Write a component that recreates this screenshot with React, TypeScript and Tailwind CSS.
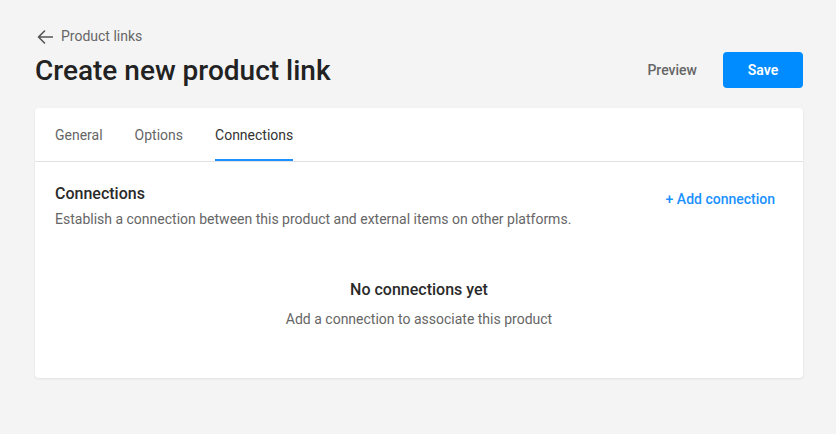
const tabs = ["General", "Options", "Connections"];

function BackArrow() {
  return (
    <svg width="16" height="14" viewBox="0 0 16 14" fill="none" className="text-[#555]">
      <path d="M15.5 7H1.5M7.5 1L1.5 7l6 6" stroke="currentColor" strokeWidth="1.6" strokeLinecap="round" strokeLinejoin="round" />
    </svg>
  );
}

export default function App() {
  const active = "Connections";

  return (
    <main
      className="min-h-screen w-full bg-[#f4f4f4] pl-[35px] pr-[33px] pt-[26px] text-[#222]"
      style={{ fontFamily: "Roboto, 'Noto Sans', sans-serif" }}
    >
      {/* header */}
      <div className="flex items-end justify-between">
        <div>
          <a className="flex items-center gap-[8px] pl-[2px] text-[14px] text-[#666]">
            <BackArrow />
            Product links
          </a>
          <h1 className="mt-[6px] text-[28px] font-medium leading-[36px] text-[#222]">
            Create new product link
          </h1>
        </div>
        <div className="flex items-center gap-[10px] pb-[1px]">
          <button className="h-[36px] px-[16px] text-[14px] font-medium text-[#666]">
            Preview
          </button>
          <button className="h-[36px] w-[80px] rounded-[4px] bg-[#008cff] text-[14px] font-semibold text-white">
            Save
          </button>
        </div>
      </div>

      {/* card */}
      <div className="mt-[19px] rounded-[4px] bg-white shadow-[0_1px_3px_rgba(0,0,0,0.08)]">
        <div className="flex gap-[32px] border-b border-[#e2e2e6] px-[20px]">
          {tabs.map((t) => (
            <div
              key={t}
              className={
                t === active
                  ? "border-b-2 border-[#1a91ff] pb-[13px] pt-[17px] text-[14px] text-[#333]"
                  : "border-b-2 border-transparent pb-[13px] pt-[17px] text-[14px] text-[#666]"
              }
            >
              {t}
            </div>
          ))}
        </div>

        <div className="px-[20px] pb-[48px] pt-[22px]">
          <div className="flex items-start justify-between">
            <div>
              <h2 className="text-[16px] font-medium leading-[20px] text-[#2a2a2a]">Connections</h2>
              <p className="mt-[5px] text-[14px] text-[#666]">
                Establish a connection between this product and external items on other platforms.
              </p>
            </div>
            <button className="mr-[8px] mt-[5px] text-[14px] font-medium text-[#1a91ff]">
              + Add connection
            </button>
          </div>

          <div className="mt-[48px] flex flex-col items-center">
            <p className="text-[16px] font-medium text-[#2a2a2a]">No connections yet</p>
            <p className="mt-[7px] text-[14px] text-[#666]">
              Add a connection to associate this product
            </p>
          </div>
        </div>
      </div>
    </main>
  );
}
